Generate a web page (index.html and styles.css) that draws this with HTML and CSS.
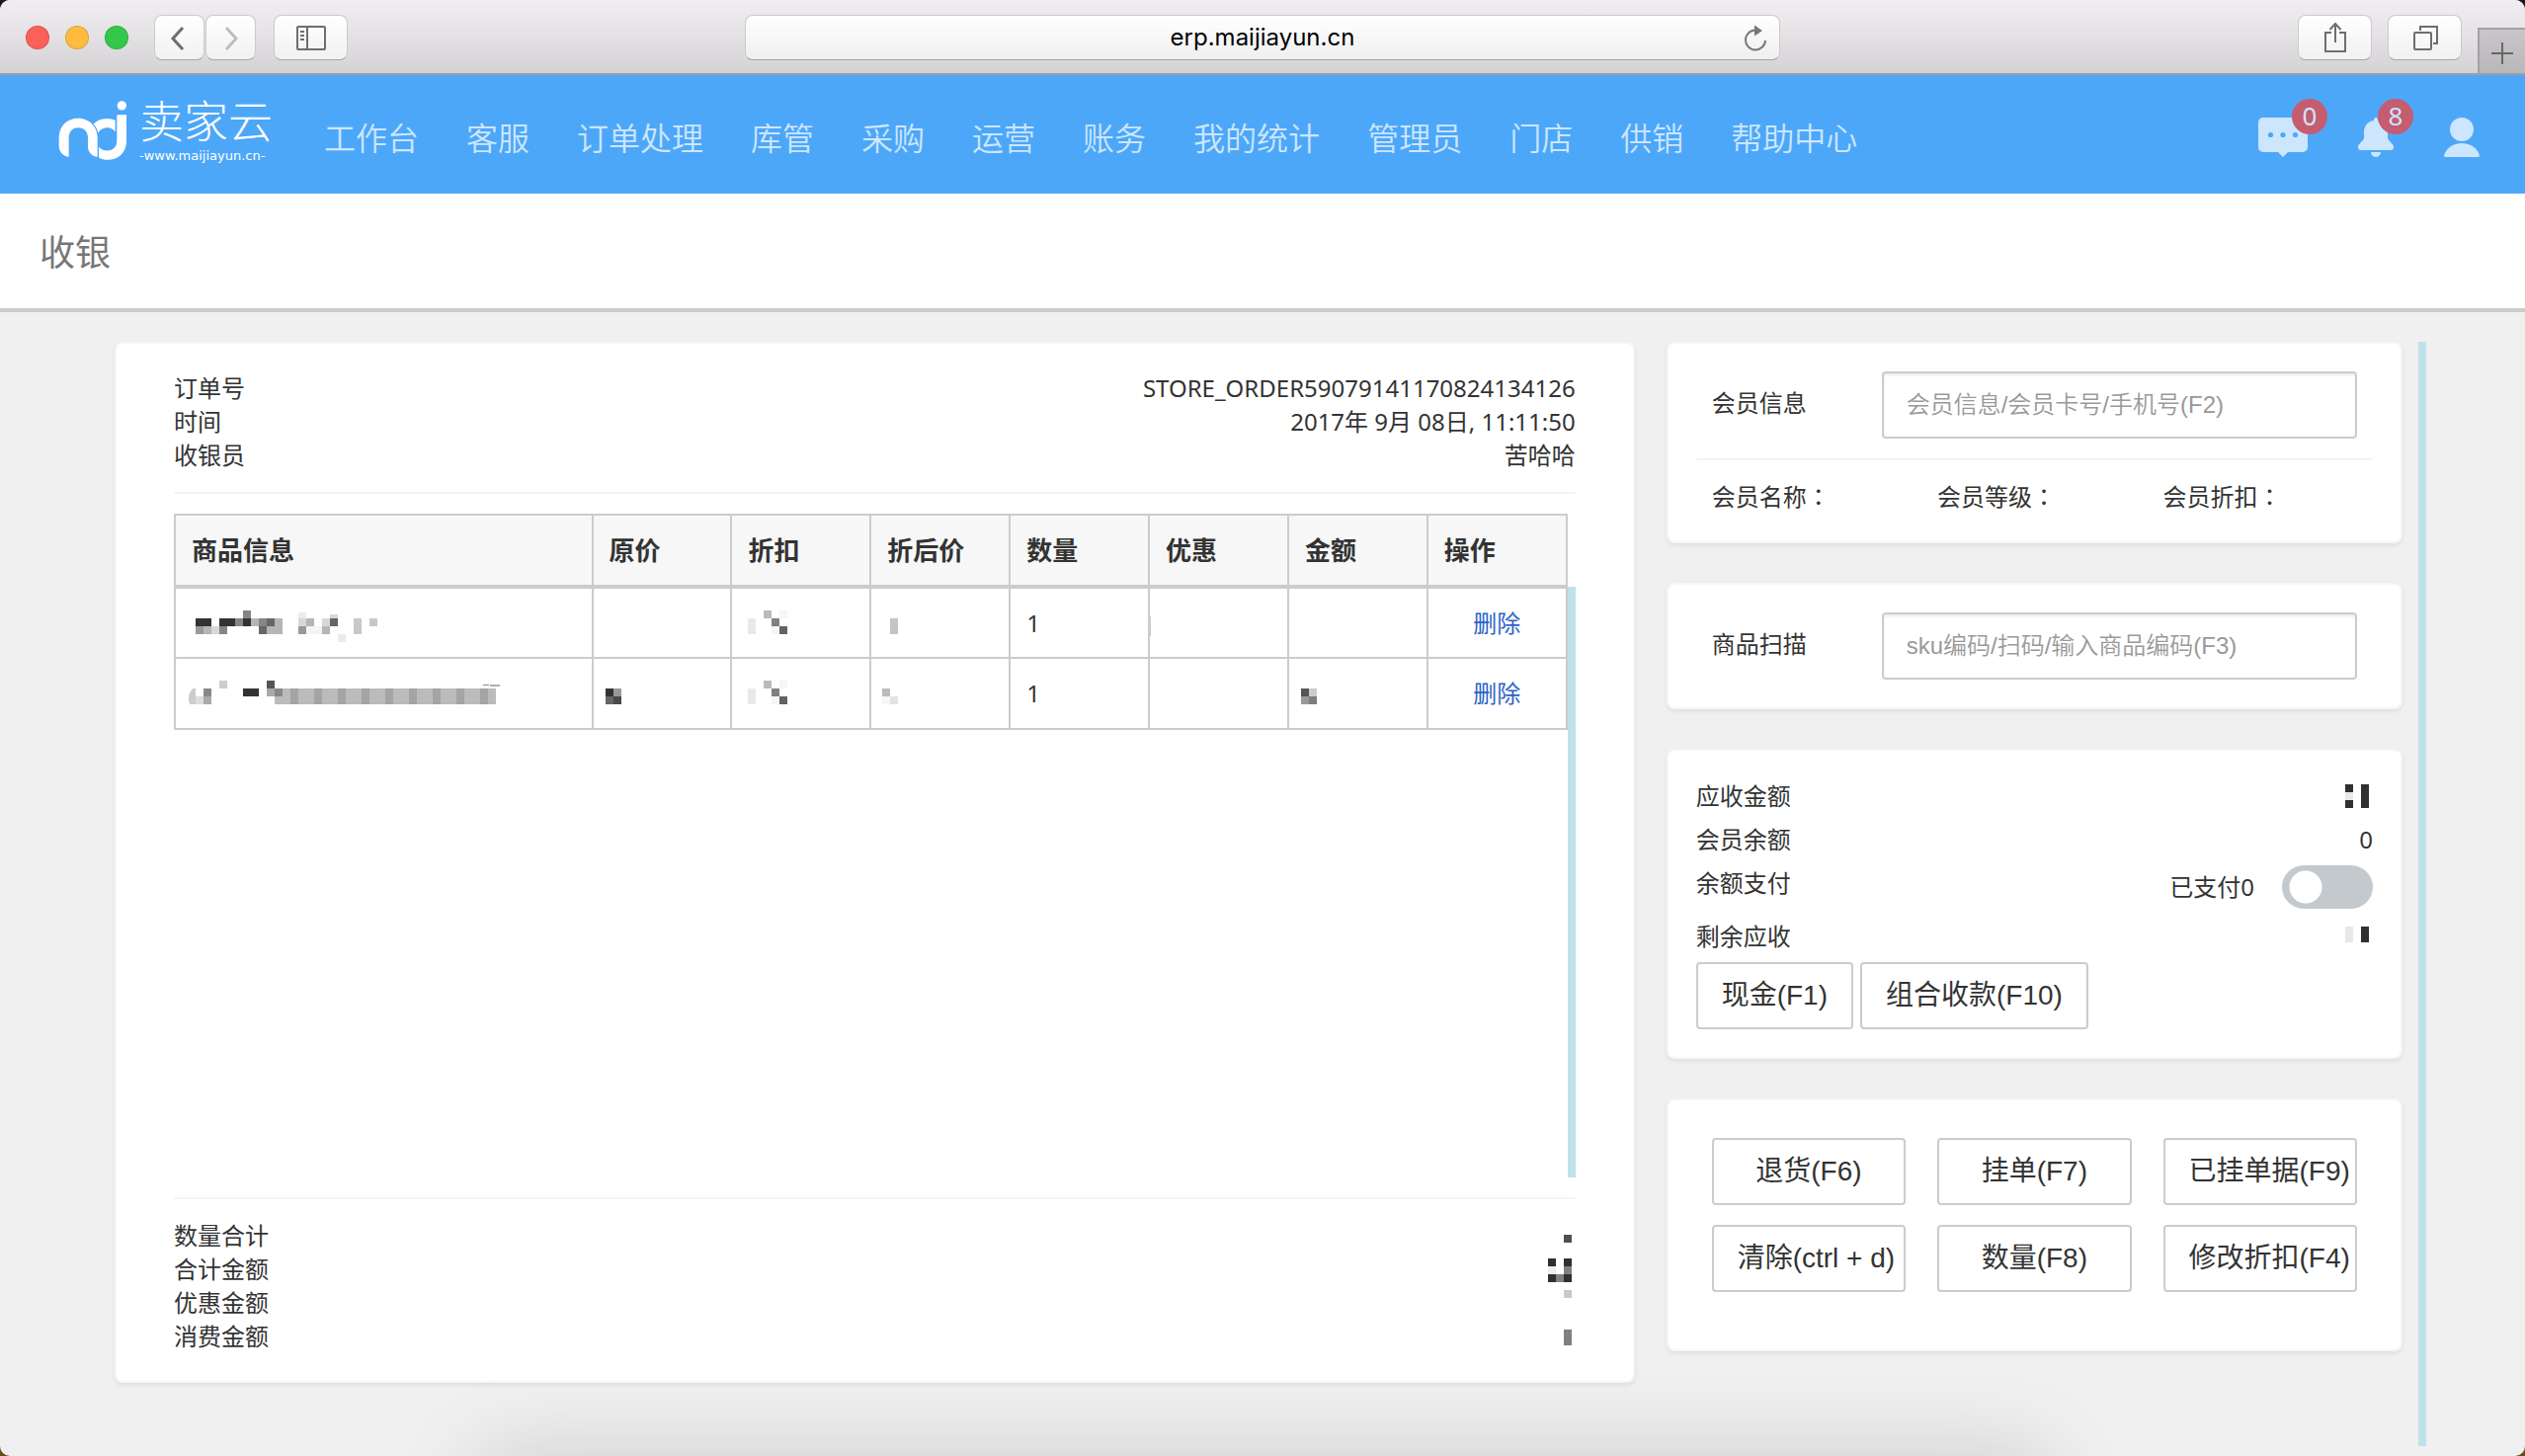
FILE: index.html
```html
<!DOCTYPE html>
<html lang="zh-CN">
<head>
<meta charset="utf-8">
<title>收银</title>
<link rel="stylesheet" href="styles.css">
</head>
<body>
<div class="window">
  <div class="toolbar">
    <div class="toolbar-side">
      <div class="lights"><span class="light light-close"></span><span class="light light-min"></span><span class="light light-max"></span></div>
      <div class="history">
        <button class="tool tool-narrow" type="button" aria-label="后退"><svg width="51" height="44" viewBox="0 0 51 44"><path d="M29 12 19 23l10 11" fill="none" stroke="#6e6e6e" stroke-width="3"/></svg></button>
        <button class="tool tool-narrow" type="button" aria-label="前进"><svg width="51" height="44" viewBox="0 0 51 44"><path d="M21 12l10 11-10 11" fill="none" stroke="#bdbdbd" stroke-width="3"/></svg></button>
      </div>
      <button class="tool" type="button" aria-label="边栏"><svg width="74" height="44" viewBox="0 0 74 44"><g fill="none" stroke="#6e6e6e" stroke-width="2"><rect x="23" y="11" width="28" height="23" rx="1"/><path d="M33 11v23M26 16h4M26 20h4M26 24h4"/></g></svg></button>
    </div>
    <div class="address">
      <span class="address-text">erp.maijiayun.cn</span>
      <button class="reload" type="button" aria-label="重新载入"><svg width="24" height="30" viewBox="0 0 24 30"><path d="M12 6.500A10 10 0 1 0 22 17" fill="none" stroke="#777" stroke-width="2"/><path d="M11 1.500v11L19 7z" fill="#777"/></svg></button>
    </div>
    <div class="toolbar-side toolbar-right">
      <button class="tool" type="button" aria-label="共享"><svg width="74" height="44" viewBox="0 0 74 44"><g fill="none" stroke="#6e6e6e" stroke-width="2"><path d="M33 17h-6v19h20V17h-6M37 27V8M31.500 14 37 8l5.500 6"/></g></svg></button>
      <button class="tool" type="button" aria-label="标签页"><svg width="74" height="44" viewBox="0 0 74 44"><g fill="none" stroke="#6e6e6e" stroke-width="2"><rect x="26" y="17" width="17" height="17" rx="1"/><path d="M32 15v-4h17v17h-4"/></g></svg></button>
      <button class="newtab" type="button" aria-label="新标签页"><svg width="46" height="46" viewBox="0 0 46 46"><path d="M12 24h22M23 13v22" stroke="#666" stroke-width="2"/></svg></button>
    </div>
  </div>

  <header class="header">
    <a class="logo" href="#" aria-label="卖家云">
      <svg class="logo-mark" width="70" height="61" viewBox="58 36 210 182" fill="#fff"><path d="M90 206C72 204 60 190 60 172V148C60 112 86 89 118 89S177 112 177 148V206C160 204 148 192 148 174V148C148 128 136 117 118 117S90 130 90 148Z"/><path d="M236 78H265V158C265 194 240 215 208 215C198 215 188 212 181 208V176C187 183 196 187 207 187C226 187 236 174 236 158Z"/><path d="M165 106C175 94 192 89 207 90C217 90 226 92 231 95V130C226 122 218 117 207 117C194 117 184 124 179 133C175 120 171 113 165 106Z"/><circle cx="251" cy="50" r="14"/></svg>
      <span class="logo-words"><span class="logo-name">卖家云</span><span class="logo-site">-www.maijiayun.cn-</span></span>
    </a>
    <nav class="nav">
      <a href="#">工作台</a><a href="#">客服</a><a href="#">订单处理</a><a href="#">库管</a><a href="#">采购</a><a href="#">运营</a><a href="#">账务</a><a href="#">我的统计</a><a href="#">管理员</a><a href="#">门店</a><a href="#">供销</a><a href="#">帮助中心</a>
    </nav>
    <div class="tray">
      <a class="tray-item" href="#" aria-label="消息"><svg width="50" height="40" viewBox="0 0 50 40"><path fill="#cce6fd" d="M5 0H45a5 5 0 0 1 5 5V30a5 5 0 0 1-5 5H30l-5 5-5-5H5a5 5 0 0 1-5-5V5a5 5 0 0 1 5-5Z"/><g fill="#4da7f9"><circle cx="12.500" cy="17.500" r="2.600"/><circle cx="25" cy="17.500" r="2.600"/><circle cx="37.500" cy="17.500" r="2.600"/></g></svg><span class="badge">0</span></a>
      <a class="tray-item" href="#" aria-label="通知"><svg width="36" height="40" viewBox="0 0 36 40"><path fill="#cce6fd" d="M16 3V2a2 2 0 0 1 4 0V3C27 4 30 9 30 15v5c0 4 6 6 6 10 0 2-1 3-3 3H3c-2 0-3-1-3-3 0-4 6-6 6-10V15C6 9 9 4 16 3ZM13 35H23A5 5 0 0 1 13 35Z"/></svg><span class="badge">8</span></a>
      <a class="tray-item" href="#" aria-label="账户"><svg width="36" height="40" viewBox="0 0 36 40" fill="#cce6fd"><circle cx="18" cy="12" r="12"/><path d="M0 38.500C2 31 9 26 18 26s16 5 18 12.500Q36 40 34 40H2Q0 40 0 38.500Z"/></svg></a>
    </div>
  </header>

  <div class="titlebar"><h1>收银</h1></div>

  <main class="content">
    <section class="card order">
      <dl class="facts">
        <div><dt>订单号</dt><dd>STORE_ORDER59079141170824134126</dd></div>
        <div><dt>时间</dt><dd>2017年 9月 08日, 11:11:50</dd></div>
        <div><dt>收银员</dt><dd>苦哈哈</dd></div>
      </dl>
      <div class="items">
        <table>
          <colgroup><col class="col-goods"><col span="7"></colgroup>
          <thead><tr><th>商品信息</th><th>原价</th><th>折扣</th><th>折后价</th><th>数量</th><th>优惠</th><th>金额</th><th>操作</th></tr></thead>
          <tbody>
            <tr>
              <td><svg class="mosaic" width="190" height="32" viewBox="-4 -3 190 32"><path fill="#333" d="M0 8h16v8H0zM24 8h16v8H24zM48 8h8v8h-8z"/><path fill="#858585" d="M48 0h8v8h-8zM24 16h8v8h-8zM40 8h8v8h-8zM64 8h8v8h-8z"/><path fill="#666" d="M72 8h8v8h-8zM64 16h8v8h-8zM136 8h8v8h-8z"/><path fill="#999" d="M0 16h8v8H0zM104 16h8v8h-8z"/><path fill="#b5b5b5" d="M8 16h8v8H8zM56 8h8v8h-8zM72 16h8v8h-8zM80 8h8v16h-8zM112 8h8v8h-8zM128 16h8v8h-8z"/><path fill="#c8c8c8" d="M160 8h8v16h-8zM176 8h8v8h-8z"/><path fill="#d8d8d8" d="M16 16h8v8h-8zM104 8h8v8h-8zM128 8h8v8h-8zM136 4h8v4h-8z"/><path fill="#ebebeb" d="M104 2h8v6h-8zM144 24h8v8h-8z"/><path fill="#f5f5f5" d="M112 16h16v8h-16z"/></svg></td>
              <td></td>
              <td><svg class="mosaic" width="42" height="32" viewBox="0 -3 42 32"><path fill="#e9e9e9" d="M0 8h8v16H0z"/><path fill="#bbb" d="M16 0h8v8h-8z"/><path fill="#f6f6f6" d="M32 0h8v8h-8zM24 16h8v8h-8z"/><path fill="#808080" d="M24 8h8v8h-8z"/><path fill="#636363" d="M32 16h8v8h-8z"/></svg></td>
              <td><svg class="mosaic" width="20" height="32" viewBox="-3 -3 20 32"><path fill="#c4c4c4" d="M0 8h8v16H0z"/></svg></td>
              <td>1</td>
              <td><svg class="mosaic" width="20" height="32" viewBox="0 -3 20 32"><path fill="#ccc" d="M-15 5Q-20 16-15 28Z"/></svg></td>
              <td></td>
              <td class="act"><a href="#">删除</a></td>
            </tr>
            <tr>
              <td><svg class="mosaic" width="320" height="32" viewBox="4 -3 320 32"><path fill="#ccc" d="M5 8h3v16H2Q-2 16 5 8zM32 0h8v8h-8z"/><path fill="#888" d="M16 8h8v8h-8z"/><path fill="#aaa" d="M16 16h8v8h-8zM80 8h8v8h-8z"/><path fill="#ddd" d="M8 16h8v8H8z"/><path fill="#333" d="M56 8h16v8H56z"/><path fill="#555" d="M80 0h8v8h-8z"/><path fill="#bbb" d="M88 8h224v16H88z"/><path fill="#a4a4a4" d="M104 8h8v16h-8zM128 8h8v16h-8zM152 8h8v16h-8zM176 8h8v16h-8zM200 8h8v16h-8zM224 8h8v16h-8zM248 8h8v16h-8zM272 8h8v16h-8zM296 8h8v16h-8z"/><path fill="#888" d="M88 8h8v8h-8zM299 4h6v1h-6z"/><path fill="#b0b0b0" d="M306 4h10v2h-10z"/></svg></td>
              <td><svg class="mosaic" width="20" height="32" viewBox="4 -3 20 32"><path fill="#333" d="M0 8h8v8H0z"/><path fill="#999" d="M8 8h8v8H8z"/><path fill="#666" d="M0 16h8v8H0z"/><path fill="#4a4a4a" d="M8 16h8v8H8z"/></svg></td>
              <td><svg class="mosaic" width="42" height="32" viewBox="0 -3 42 32"><path fill="#e9e9e9" d="M0 8h8v16H0z"/><path fill="#bbb" d="M16 0h8v8h-8z"/><path fill="#f6f6f6" d="M32 0h8v8h-8zM24 16h8v8h-8z"/><path fill="#808080" d="M24 8h8v8h-8z"/><path fill="#636363" d="M32 16h8v8h-8z"/></svg></td>
              <td><svg class="mosaic" width="20" height="32" viewBox="5 -3 20 32"><path fill="#bbb" d="M0 8h8v8H0z"/><path fill="#f7f7f7" d="M0 16h8v8H0z"/><path fill="#e2e2e2" d="M8 16h8v8H8z"/></svg></td>
              <td>1</td>
              <td></td>
              <td><svg class="mosaic" width="20" height="32" viewBox="4 -3 20 32"><path fill="#555" d="M0 8h8v8H0z"/><path fill="#ccc" d="M8 8h8v8H8z"/><path fill="#999" d="M0 16h8v8H0z"/><path fill="#7d7d7d" d="M8 16h8v8H8z"/></svg></td>
              <td class="act"><a href="#">删除</a></td>
            </tr>
          </tbody>
        </table>
        <div class="items-scroll"></div>
      </div>
      <dl class="facts totals">
        <div><dt>数量合计</dt><dd><svg class="mosaic" width="28" height="34" viewBox="0 0 28 34"><path fill="#505050" d="M16 16h8v8h-8z"/></svg></dd></div>
        <div><dt>合计金额</dt><dd><svg class="mosaic" width="28" height="34" viewBox="0 0 28 34"><path fill="#303030" d="M0 6h8v8H0zM16 6h8v8h-8zM0 22h8v8H0zM16 22h8v8h-8z"/><path fill="#808080" d="M16 14h8v8h-8zM8 22h8v8H8z"/><path fill="#eee" d="M0 14h8v8H0z"/></svg></dd></div>
        <div><dt>优惠金额</dt><dd><svg class="mosaic" width="28" height="34" viewBox="0 0 28 34"><path fill="#c8c8c8" d="M16 4h8v8h-8z"/></svg></dd></div>
        <div><dt>消费金额</dt><dd><svg class="mosaic" width="28" height="34" viewBox="0 0 28 34"><path fill="#808080" d="M16 10h8v16h-8z"/></svg></dd></div>
      </dl>
    </section>

    <div class="side">
      <div class="side-cards">
        <section class="card">
          <div class="field"><label for="member">会员信息</label><input id="member" type="text" placeholder="会员信息/会员卡号/手机号(F2)"></div>
          <div class="member"><span>会员名称<span class="colon" lang="zh-Hant">：</span></span><span>会员等级<span class="colon" lang="zh-Hant">：</span></span><span>会员折扣<span class="colon" lang="zh-Hant">：</span></span></div>
        </section>
        <section class="card">
          <div class="field"><label for="sku">商品扫描</label><input id="sku" type="text" placeholder="sku编码/扫码/输入商品编码(F3)"></div>
        </section>
        <section class="card pay">
          <div class="pay-row"><span>应收金额</span><svg class="mosaic" width="28" height="44" viewBox="0 0 28 44"><path fill="#303030" d="M0 10h8v8H0zM0 26h8v8H0zM16 10h8v24h-8z"/><path fill="#e8e8e8" d="M0 18h8v8H0z"/></svg></div>
          <div class="pay-row"><span>会员余额</span><span>0</span></div>
          <div class="pay-row pay-switch"><label for="balance">余额支付</label><span class="switch">已支付0<input id="balance" type="checkbox"></span></div>
          <div class="pay-row"><span>剩余应收</span><svg class="mosaic" width="28" height="44" viewBox="0 0 28 44"><path fill="#e8e8e8" d="M0 12h8v16H0z"/><path fill="#303030" d="M16 12h8v16h-8z"/></svg></div>
          <div class="pay-buttons"><button class="btn" type="button">现金(F1)</button><button class="btn" type="button">组合收款(F10)</button></div>
        </section>
        <section class="card actions">
          <button class="btn" type="button">退货(F6)</button>
          <button class="btn" type="button">挂单(F7)</button>
          <button class="btn" type="button">已挂单据(F9)</button>
          <button class="btn" type="button">清除(ctrl + d)</button>
          <button class="btn" type="button">数量(F8)</button>
          <button class="btn" type="button">修改折扣(F4)</button>
        </section>
      </div>
      <div class="side-scroll"></div>
    </div>
  </main>
</div>
<div class="dock-shadow"></div>
</body>
</html>
```
FILE: styles.css
```css
* { box-sizing: border-box; }
html { background: linear-gradient(#1b1422, #6b4a1e); }
body {
  margin: 0;
  overflow-x: hidden;
  font: 24px/34px "Noto Sans", "Noto Sans CJK SC", sans-serif;
  color: #333;
}
a { text-decoration: none; }
svg { display: block; }
button { font: inherit; color: inherit; padding: 0; cursor: pointer; }

.window {
  display: flex;
  flex-direction: column;
  min-height: 100vh;
  background: #f0f0f0;
  border-radius: 10px;
  overflow: hidden;
}

/* browser toolbar */
.toolbar {
  display: grid;
  grid-template-columns: 1fr 41% 1fr;
  height: 76px;
  background: linear-gradient(#f0eef1, #e6e4e7 40%, #d4d2d5);
  border-bottom: 2px solid #a09ea2;
}
.toolbar-side { display: flex; align-items: flex-start; padding: 15px 0 0 26px; }
.toolbar-right { justify-content: flex-end; gap: 16px; padding-left: 0; }
.lights { display: flex; gap: 16px; padding-top: 11px; margin-right: 26px; }
.light { width: 24px; height: 24px; border-radius: 50%; border: 1px solid #0002; }
.light-close { background: #fc605b; }
.light-min { background: #fdbc40; }
.light-max { background: #34c84a; }
.history { display: flex; gap: 1px; margin-right: 18px; }
.tool {
  width: 75px;
  height: 46px;
  border: 1px solid #cbc9cc;
  border-bottom-color: #a9a7aa;
  border-radius: 8px;
  background: linear-gradient(#fff, #f1f1f1);
}
.tool-narrow { width: 51px; }
.tool svg { margin: 0 auto; }
.tool-narrow svg { margin-left: -1px; }
.address {
  display: flex;
  align-items: center;
  justify-content: center;
  position: relative;
  height: 46px;
  margin-top: 15px;
  border: 1px solid #cbc9cc;
  border-bottom-color: #a09ea2;
  border-radius: 8px;
  background: linear-gradient(#fff, #efefef);
  color: #000;
  font-family: Inter, sans-serif;
}
.reload { position: absolute; right: 12px; top: 8px; border: 0; background: none; }
.newtab {
  width: 48px;
  height: 46px;
  margin-top: 13px;
  border: solid #a3a1a4;
  border-width: 2px 0 0 2px;
  background: linear-gradient(#c8c6c9, #b9b7ba);
}

/* site header */
.header {
  display: flex;
  align-items: center;
  height: 120px;
  padding: 0 46px 0 59px;
  background: #4da7f9;
}
.logo { display: flex; align-items: center; gap: 12px; width: 269px; padding-bottom: 8px; color: #fff; }
.logo-words { display: flex; flex-direction: column; gap: 8px; }
.logo-name { font: 300 45px/44px "Noto Sans CJK SC", sans-serif; }
.logo-site { font: 13px/14px "DejaVu Sans", sans-serif; }
.nav { display: flex; flex: 1; gap: 48px; padding-top: 8px; }
.nav a { color: #cce6fd; font-size: 32px; line-height: 40px; font-weight: 350; }
.tray { display: flex; gap: 51px; padding-top: 6px; }
.tray-item { position: relative; }
.badge {
  position: absolute;
  right: -20px;
  top: -19px;
  width: 36px;
  height: 36px;
  border-radius: 50%;
  background: #c55c70;
  color: #cce6fd;
  font-size: 26px;
  line-height: 34px;
  text-align: center;
}

.titlebar { height: 120px; padding: 36px 40px; background: #fff; border-bottom: 4px solid #ccc; }
.titlebar h1 { margin: 0; font-size: 36px; line-height: 48px; font-weight: 400; color: #777; }

/* page body */
.content {
  display: grid;
  grid-template-columns: 2fr 1fr;
  gap: 32px;
  align-items: start;
  flex: 1;
  padding: 30px 100px 10px 116px;
}
.card {
  background: #fff;
  background-clip: padding-box;
  border: 2px solid #f6f6f6;
  border-radius: 8px;
  box-shadow: 0 2px 4px #00000014;
}
.order { padding: 28px 58px; }
.facts { margin: 0; padding-bottom: 20px; border-bottom: 2px solid #f4f4f4; }
.facts div { display: flex; justify-content: space-between; height: 34px; }
.facts dd { margin: 0; }
.totals { padding: 20px 0 0; border: solid #f4f4f4; border-width: 2px 0 0; }
.mosaic { overflow: visible; shape-rendering: crispEdges; }

.items { display: flex; align-items: flex-start; height: 672px; margin: 20px 0; }
.items table { flex: 1; width: 100%; min-width: 0; table-layout: fixed; border-collapse: collapse; }
.items-scroll { flex: none; width: 8px; height: 598px; margin-top: 74px; background: #bfe1e9; }
.col-goods { width: 30%; }
th, td { height: 72px; padding: 0 16px; border: 2px solid #ccc; text-align: left; }
th { height: 73px; border-bottom-width: 4px; background: #f7f7f7; font-size: 26px; font-weight: 700; }
.act { text-align: center; }
.act a { color: #2b63c5; }

.side { display: flex; gap: 16px; align-self: stretch; }
.side-cards { display: flex; flex-direction: column; gap: 40px; flex: 1; }
.side-scroll { width: 8px; background: #bfe1e9; }

.field {
  display: grid;
  grid-template-columns: 172px 1fr;
  align-items: center;
  padding: 28px 44px;
}
.field label { padding-bottom: 4px; }
.field input {
  width: 100%;
  height: 68px;
  padding: 0 23px;
  border: 2px solid #ccc;
  border-radius: 4px;
  box-shadow: inset 0 2px 3px #00000014;
  font: 24px "Liberation Sans", "Noto Sans CJK SC", sans-serif;
}
.field input::placeholder { color: #999; font-weight: 350; }
.member {
  display: grid;
  grid-template-columns: repeat(3, 1fr);
  gap: 32px;
  height: 84px;
  margin: -8px 28px 0;
  padding: 20px 16px 28px;
  border-top: 2px solid #f4f4f4;
  white-space: nowrap;
}
.colon { font-family: "Noto Sans CJK TC", sans-serif; line-height: 1; }

.pay { padding: 24px 28px 28px; }
.pay-row { display: flex; justify-content: space-between; line-height: 44px; }
.pay-switch { padding-bottom: 6px; }
.switch { display: flex; align-items: center; gap: 28px; height: 44px; margin-top: 4px; }
.switch input {
  appearance: none;
  width: 92px;
  height: 44px;
  margin: 0;
  border-radius: 22px;
  background: radial-gradient(circle at 24px 22px, #fff 16px, #c4c9cd 17px);
}
.pay-buttons { display: flex; gap: 7px; margin-top: 4px; }
.btn {
  height: 68px;
  padding: 0 24px;
  border: 2px solid #ccc;
  border-radius: 4px;
  background: #fff;
  font: 28px/40px "Liberation Sans", "Noto Sans CJK SC", sans-serif;
  white-space: nowrap;
}
.actions {
  display: grid;
  grid-template-columns: repeat(3, minmax(0, 1fr));
  gap: 20px 32px;
  padding: 38px 44px 58px;
}

/* soft shade rising from below the window */
.dock-shadow {
  position: fixed;
  top: 100%;
  left: 19%;
  right: 19%;
  height: 100px;
  box-shadow: 0 0 90px #00000028;
}
```
